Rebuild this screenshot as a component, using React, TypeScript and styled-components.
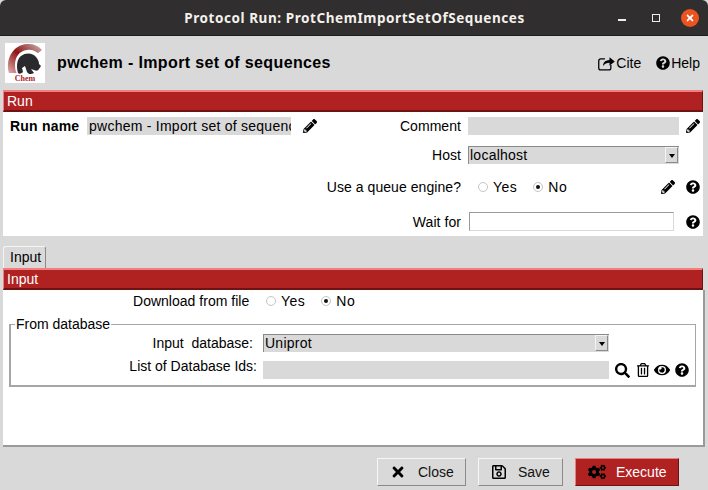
import React, { FunctionComponent, ReactNode } from 'react';
import styled, { createGlobalStyle } from 'styled-components';
import {
  FaCogs,
  FaEye,
  FaPencilAlt,
  FaQuestionCircle,
  FaRegSave,
  FaRegTrashAlt,
  FaSearch,
  FaTimes,
} from 'react-icons/fa';

const RED = '#b02222';

const GlobalStyle = createGlobalStyle`
  html, body {
    margin: 0;
    padding: 0;
    width: 708px;
    height: 490px;
    overflow: hidden;
    background: #d9d9d9;
    font-family: "Liberation Sans", Arial, sans-serif;
    font-size: 14px;
    color: #000;
  }
`;

const Window = styled.div`
  display: flex;
  flex-direction: column;
  width: 708px;
  height: 490px;
  background: #d9d9d9;
`;

const TitleBar = styled.div`
  position: relative;
  display: flex;
  justify-content: center;
  align-items: center;
  flex: none;
  height: 36px;
  padding-left: 1px;
  background: #302e2e;
  border-bottom: 1px solid #1d1c1c;
  border-radius: 6px 6px 0 0;
  box-sizing: border-box;
  color: #f4f1ec;
  font-family: "Noto Sans", "Open Sans", sans-serif;
  font-size: 13.5px;
  font-weight: 700;
  letter-spacing: 0.57px;
`;

const WindowControls = styled.div`
  position: absolute;
  top: 0;
  right: 9px;
  height: 36px;
  display: flex;
  align-items: center;
  gap: 20px;
`;

const Minimize = styled.span`
  width: 8px;
  height: 2px;
  margin-top: 4px;
  background: #f0eeea;
`;

const Maximize = styled.span`
  width: 6px;
  height: 6px;
  margin: 0 1px 0 6px;
  border: 1px solid #f0eeea;
`;

const CloseDot = styled.span`
  display: flex;
  align-items: center;
  justify-content: center;
  width: 18px;
  height: 18px;
  border-radius: 50%;
  background: #e95420;
  color: #fff;
  font-size: 10px;
`;

const Header = styled.div`
  display: flex;
  align-items: center;
  flex: none;
  height: 54px;
  padding: 0 8px 0 5px;
  box-sizing: border-box;
`;

const LogoBox = styled.div`
  width: 40px;
  height: 40px;
  flex: none;
  background: #fff;
`;

const ProtocolTitle = styled.h1`
  flex: 1;
  margin: 0 0 0 12px;
  font-size: 16px;
  font-weight: 700;
  letter-spacing: 0.36px;
`;

const HeaderLink = styled.span`
  display: inline-flex;
  align-items: center;
  margin-left: 15px;
  svg {
    margin-right: 1px;
  }
`;

const SectionBar = styled.div`
  flex: none;
  height: 22px;
  margin: 0 5px 0 3px;
  padding-left: 3px;
  box-sizing: border-box;
  background: ${RED};
  color: #fff;
  border-top: 2px solid #f08080;
  border-left: 1px solid #f08080;
  border-bottom: 2px solid #6e1212;
  border-right: 1px solid #6e1212;
  line-height: 19px;
`;

const RunPanel = styled.div`
  flex: none;
  height: 124px;
  margin: 0 5px 0 3px;
  padding-top: 5px;
  box-sizing: border-box;
  background: #fff;
`;

const RunRow = styled.div<{ $height: number; $gap?: number }>`
  display: grid;
  grid-template-columns: 458px 211px 1fr;
  column-gap: 7px;
  height: ${(p) => p.$height}px;
  margin-top: ${(p) => p.$gap ?? 0}px;
  align-items: center;
  letter-spacing: 0.06px;
`;

const LeftCell = styled.div`
  display: flex;
  align-items: center;
  justify-content: flex-end;
  height: 100%;
`;

const RunName = styled.div`
  display: flex;
  align-items: center;
  flex: 1;
  height: 100%;
  padding-left: 7px;
`;

const BoldLabel = styled.span`
  width: 77px;
  font-weight: 700;
  letter-spacing: 0.2px;
`;

const Field = styled.div<{ $width?: number }>`
  width: ${(p) => (p.$width ? `${p.$width}px` : '100%')};
  height: 100%;
  box-sizing: border-box;
  padding-left: 2px;
  background: #d9d9d9;
  line-height: 18px;
  white-space: nowrap;
  overflow: hidden;
  letter-spacing: 0.25px;
`;

const IconSlot = styled.span<{ $left?: number; $size?: number }>`
  display: inline-flex;
  align-items: center;
  margin-left: ${(p) => p.$left ?? 0}px;
  font-size: ${(p) => p.$size ?? 14}px;
`;

const IconCell = styled.div`
  display: flex;
  align-items: center;
  justify-content: flex-end;
  padding-right: 3px;
`;

const QueueCell = styled.div`
  display: flex;
  align-items: center;
  padding: 0 4px 0 10px;
`;

const Spacer = styled.div`
  flex: 1;
`;

const RadioWrap = styled.span`
  display: inline-flex;
  align-items: center;
  margin-right: 16px;
  letter-spacing: 0.5px;
`;

const RadioDot = styled.span<{ $checked?: boolean }>`
  position: relative;
  width: 8px;
  height: 8px;
  margin-right: 5px;
  border: 1px solid #c4c4c4;
  border-radius: 50%;
  background: #fff;
  &::after {
    content: '';
    display: ${(p) => (p.$checked ? 'block' : 'none')};
    position: absolute;
    top: 2px;
    left: 2px;
    width: 4px;
    height: 4px;
    border-radius: 50%;
    background: #111;
  }
`;

const SelectBox = styled.div`
  display: flex;
  align-items: center;
  justify-content: space-between;
  height: 18px;
  box-sizing: border-box;
  padding: 0 0 1px 1px;
  background: #d9d9d9;
  border-top: 1px solid #8a8a8a;
  border-left: 1px solid #8a8a8a;
  letter-spacing: 0.25px;
`;

const SelectArrow = styled.span`
  display: flex;
  align-items: flex-end;
  justify-content: center;
  flex: none;
  width: 13px;
  height: 16px;
  margin-right: 1px;
  padding-bottom: 4px;
  box-sizing: border-box;
  border-top: 1px solid #f4f4f4;
  border-left: 1px solid #f4f4f4;
  border-right: 1px solid #8a8a8a;
  border-bottom: 1px solid #8a8a8a;
  &::after {
    content: '';
    border-left: 3px solid transparent;
    border-right: 3px solid transparent;
    border-top: 4px solid #000;
  }
`;

const WaitInput = styled.div`
  width: 205px;
  height: 19px;
  margin-left: 1px;
  box-sizing: border-box;
  background: #fff;
  border: 1px solid #d9d9d9;
  border-top-color: #9a9a9a;
  border-left-color: #9a9a9a;
`;

const TabStrip = styled.div`
  display: flex;
  flex: none;
  height: 22px;
  margin: 10px 5px 0 3px;
  align-items: flex-end;
`;

const Tab = styled.div`
  width: 43px;
  height: 22px;
  box-sizing: border-box;
  padding-left: 6px;
  background: #d9d9d9;
  border: 1px solid #f4f4f4;
  border-right: 1px solid #8a8a8a;
  border-bottom: none;
  border-radius: 3px 3px 0 0;
  line-height: 21px;
`;

const InputPanel = styled.div`
  flex: none;
  height: 157px;
  margin: 0 3px;
  padding: 0 7px 0 6px;
  box-sizing: border-box;
  background: #fff;
  border-right: 2px solid #9a9a9a;
  border-bottom: 2px solid #9a9a9a;
`;

const DownloadRow = styled.div`
  display: flex;
  align-items: center;
  height: 20px;
  margin-top: 1px;
  padding-left: 124px;
`;

const DownloadLabel = styled.span`
  width: 133px;
  letter-spacing: 0.02px;
`;

const Group = styled.fieldset`
  margin: 6px 0 0 0;
  padding: 0;
  height: 70px;
  box-sizing: border-box;
  border: 2px solid #a6a6a6;
  border-top-width: 1px;
  border-right-width: 1px;
`;

const GroupTitle = styled.legend`
  margin-left: 4px;
  padding: 0 1px;
  font-size: 14px;
  line-height: 14px;
`;

const GroupRow = styled.div<{ $height: number; $gap: number }>`
  display: grid;
  grid-template-columns: 252px 346px 1fr;
  align-items: center;
  height: ${(p) => p.$height}px;
  margin-top: ${(p) => p.$gap}px;
`;

const GroupLabel = styled.div<{ $pad: number; $raised?: boolean }>`
  align-self: ${(p) => (p.$raised ? 'start' : 'center')};
  margin-top: ${(p) => (p.$raised ? -2 : 0)}px;
  text-align: right;
  line-height: ${(p) => (p.$raised ? '14px' : 'normal')};
  padding-right: ${(p) => p.$pad}px;
  white-space: pre;
`;

const GroupIcons = styled.div`
  display: flex;
  align-items: center;
  padding-left: 6px;
`;

const Footer = styled.div`
  display: flex;
  justify-content: flex-end;
  gap: 12px;
  flex: none;
  margin-top: 11px;
  padding-right: 29px;
`;

const ActionButton = styled.div<{ $primary?: boolean; $width: number; $iconGap: number }>`
  display: flex;
  align-items: center;
  width: ${(p) => p.$width}px;
  height: 28px;
  padding-left: 12px;
  box-sizing: border-box;
  background: ${(p) => (p.$primary ? RED : '#d9d9d9')};
  color: ${(p) => (p.$primary ? '#fff' : '#111')};
  border: 1px solid;
  border-color: ${(p) => (p.$primary ? '#e88080 #6e1212 #6e1212 #e88080' : '#f6f6f6 #8a8a8a #8a8a8a #f6f6f6')};
  svg {
    flex: none;
    color: #000;
    margin-right: ${(p) => p.$iconGap}px;
  }
`;

const ChemLogo: FunctionComponent = () => (
  <svg width="40" height="40" viewBox="0 0 40 40">
    <defs>
      <linearGradient id="arc" x1="0" y1="0.9" x2="1" y2="0">
        <stop offset="0" stopColor="#d8a0a0" />
        <stop offset="0.45" stopColor="#8e1414" />
        <stop offset="1" stopColor="#c9b8b8" />
      </linearGradient>
    </defs>
    <path d="M4 30C0 16 8 2 22 1c6-.4 11 1.500 15 6l-4 3C29 7 25 6 22 7 14 8 10 14 10 22c0 3 .5 6 1.500 8z" fill="url(#arc)" />
    <path d="M13 30c-2-7-1-14 3-17 5-4 12-3 15 1 2 2 3 5 3 7l2 2-2 3c-1 2-3 2-5 1l-3-1 3 4c-3 2-6 1-7-1l-2-6-3 2 1 4c-2 2-4 2-5 1z" fill="#2a2a2e" />
    <text x="20" y="38" textAnchor="middle" fontFamily="Liberation Serif, serif" fontWeight="700" fontSize="8" fill="#b02222">Chem</text>
  </svg>
);

const CiteIcon: FunctionComponent = () => (
  <svg width="17" height="15" viewBox="0 0 16 14">
    <path d="M6.500 2.700H2.500a1.800 1.800 0 0 0-1.800 1.800v6.800a1.800 1.800 0 0 0 1.800 1.800h7.800a1.800 1.800 0 0 0 1.800-1.800V8.300" fill="none" stroke="#000" strokeWidth="1.200" />
    <path d="M4.800 8.200c.6-2.700 2.500-4.200 6-4.400V1l5 4-5 4V6.300C8.300 6.300 6.300 7 4.800 9.400z" fill="#000" />
  </svg>
);

const Radio: FunctionComponent<{ checked?: boolean; children: ReactNode }> = ({ checked, children }) => (
  <RadioWrap>
    <RadioDot $checked={checked} />
    {children}
  </RadioWrap>
);

export default function App() {
  return (
    <Window>
      <GlobalStyle />
      <TitleBar>
        Protocol Run: ProtChemImportSetOfSequences
        <WindowControls>
          <Minimize />
          <Maximize />
          <CloseDot>
            <FaTimes />
          </CloseDot>
        </WindowControls>
      </TitleBar>

      <Header>
        <LogoBox>
          <ChemLogo />
        </LogoBox>
        <ProtocolTitle>pwchem - Import set of sequences</ProtocolTitle>
        <HeaderLink>
          <CiteIcon />
          Cite
        </HeaderLink>
        <HeaderLink>
          <FaQuestionCircle size={14} />
          Help
        </HeaderLink>
      </Header>

      <SectionBar>Run</SectionBar>
      <RunPanel>
        <RunRow $height={18}>
          <LeftCell>
            <RunName>
              <BoldLabel>Run name</BoldLabel>
              <Field $width={204}>pwchem - Import set of sequences</Field>
              <IconSlot $left={12}>
                <FaPencilAlt />
              </IconSlot>
            </RunName>
            Comment
          </LeftCell>
          <Field />
          <IconCell>
            <FaPencilAlt />
          </IconCell>
        </RunRow>
        <RunRow $height={18} $gap={11}>
          <LeftCell>Host</LeftCell>
          <SelectBox>
            localhost
            <SelectArrow />
          </SelectBox>
        </RunRow>
        <RunRow $height={20} $gap={13}>
          <LeftCell>Use a queue engine?</LeftCell>
          <QueueCell>
            <Radio>Yes</Radio>
            <Radio checked>No</Radio>
            <Spacer />
            <FaPencilAlt />
          </QueueCell>
          <IconCell>
            <FaQuestionCircle />
          </IconCell>
        </RunRow>
        <RunRow $height={19} $gap={15}>
          <LeftCell>Wait for</LeftCell>
          <WaitInput />
          <IconCell>
            <FaQuestionCircle />
          </IconCell>
        </RunRow>
      </RunPanel>

      <TabStrip>
        <Tab>Input</Tab>
      </TabStrip>
      <SectionBar>Input</SectionBar>
      <InputPanel>
        <DownloadRow>
          <DownloadLabel>Download from file</DownloadLabel>
          <Radio>Yes</Radio>
          <Radio checked>No</Radio>
        </DownloadRow>
        <Group>
          <GroupTitle>From database</GroupTitle>
          <GroupRow $height={18} $gap={3}>
            <GroupLabel $pad={10}>Input  database:</GroupLabel>
            <SelectBox>
              Uniprot
              <SelectArrow />
            </SelectBox>
          </GroupRow>
          <GroupRow $height={18} $gap={9}>
            <GroupLabel $pad={6} $raised>
              List of Database Ids:
            </GroupLabel>
            <Field />
            <GroupIcons>
              <IconSlot $size={15}>
                <FaSearch />
              </IconSlot>
              <IconSlot $left={6}>
                <FaRegTrashAlt />
              </IconSlot>
              <IconSlot $left={4} $size={16}>
                <FaEye />
              </IconSlot>
              <IconSlot $left={5}>
                <FaQuestionCircle />
              </IconSlot>
            </GroupIcons>
          </GroupRow>
        </Group>
      </InputPanel>

      <Footer>
        <ActionButton $width={89} $iconGap={12}>
          <FaTimes size={16} />
          Close
        </ActionButton>
        <ActionButton $width={85} $iconGap={11}>
          <FaRegSave size={16} />
          Save
        </ActionButton>
        <ActionButton $primary $width={104} $iconGap={10}>
          <FaCogs size={18} />
          Execute
        </ActionButton>
      </Footer>
    </Window>
  );
}
